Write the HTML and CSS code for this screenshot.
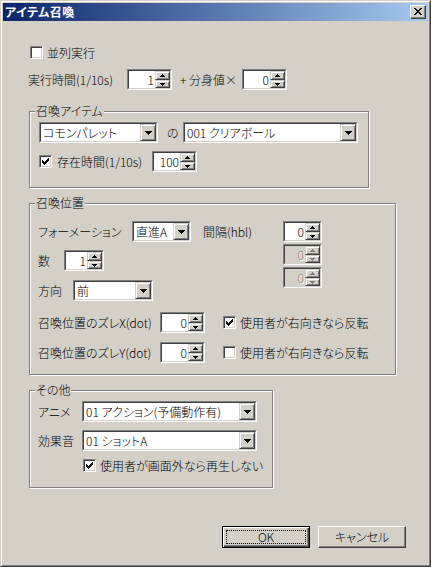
FILE: index.html
```html
<!DOCTYPE html>
<html lang="ja">
<head>
<meta charset="utf-8">
<title>アイテム召喚</title>
<link rel="stylesheet" href="styles.css">
</head>
<body>
<div class="window">
 <div class="frame">
  <div class="titlebar">
   <span class="title">アイテム召喚</span>
   <span class="closebtn"><svg width="8" height="7" viewBox="0 0 8 7" shape-rendering="crispEdges"><path d="M0 0h2v1H0zM6 0h2v1H6zM1 1h2v1H1zM5 1h2v1H5zM2 2h4v1H2zM3 3h2v1H3zM2 4h4v1H2zM1 5h2v1H1zM5 5h2v1H5zM0 6h2v1H0zM6 6h2v1H6z"/></svg></span>
  </div>
  <div class="client">
   <div class="row row-parallel">
    <span class="cb"></span><span class="cb-label">並列実行</span>
   </div>
   <div class="row row-time">
    <span class="lbl lbl-time">実行時間(1/10s)</span>
    <span class="spin w45"><span class="spin-in"><span class="spin-val">1</span><span class="spin-btns"><span class="sb up"><svg width="5" height="3" viewBox="0 0 5 3" shape-rendering="crispEdges"><path d="M2 0h1v1H2zM1 1h3v1H1zM0 2h5v1H0z"/></svg></span><span class="sb dn"><svg width="5" height="3" viewBox="0 0 5 3" shape-rendering="crispEdges"><path d="M0 0h5v1H0zM1 1h3v1H1zM2 2h1v1H2z"/></svg></span></span></span></span>
    <span class="lbl lbl-bunshin">+ 分身値×</span>
    <span class="spin w45"><span class="spin-in"><span class="spin-val">0</span><span class="spin-btns"><span class="sb up"><svg width="5" height="3" viewBox="0 0 5 3" shape-rendering="crispEdges"><path d="M2 0h1v1H2zM1 1h3v1H1zM0 2h5v1H0z"/></svg></span><span class="sb dn"><svg width="5" height="3" viewBox="0 0 5 3" shape-rendering="crispEdges"><path d="M0 0h5v1H0zM1 1h3v1H1zM2 2h1v1H2z"/></svg></span></span></span></span>
   </div>

   <div class="group g-item">
    <div class="gtitle">召喚アイテム</div>
    <div class="row row-combo">
     <span class="combo w119"><span class="combo-in"><span class="ctext">コモンパレット</span><span class="cbtn"><svg width="7" height="4" viewBox="0 0 7 4" shape-rendering="crispEdges"><path d="M0 0h7v1H0zM1 1h5v1H1zM2 2h3v1H2zM3 3h1v1H3z"/></svg></span></span></span>
     <span class="lbl lbl-no">の</span>
     <span class="combo w175"><span class="combo-in"><span class="ctext">001 クリアボール</span><span class="cbtn"><svg width="7" height="4" viewBox="0 0 7 4" shape-rendering="crispEdges"><path d="M0 0h7v1H0zM1 1h5v1H1zM2 2h3v1H2zM3 3h1v1H3z"/></svg></span></span></span>
    </div>
    <div class="row row-exist">
     <span class="cb"><svg width="7" height="7" viewBox="0 0 7 7" shape-rendering="crispEdges"><path d="M0 2h1v3H0zM1 3h1v3H1zM2 4h1v3H2zM3 3h1v3H3zM4 2h1v3H4zM5 1h1v3H5zM6 0h1v3H6z"/></svg></span>
     <span class="cb-label lbl-exist">存在時間(1/10s)</span>
     <span class="spin w45"><span class="spin-in"><span class="spin-val">100</span><span class="spin-btns"><span class="sb up"><svg width="5" height="3" viewBox="0 0 5 3" shape-rendering="crispEdges"><path d="M2 0h1v1H2zM1 1h3v1H1zM0 2h5v1H0z"/></svg></span><span class="sb dn"><svg width="5" height="3" viewBox="0 0 5 3" shape-rendering="crispEdges"><path d="M0 0h5v1H0zM1 1h3v1H1zM2 2h1v1H2z"/></svg></span></span></span></span>
    </div>
   </div>

   <div class="group g-pos">
    <div class="gtitle">召喚位置</div>
    <div class="pos-top">
     <div class="pos-left">
      <div class="row row-form">
       <span class="lbl lbl-form">フォーメーション</span>
       <span class="combo w59"><span class="combo-in"><span class="ctext">直進A</span><span class="cbtn"><svg width="7" height="4" viewBox="0 0 7 4" shape-rendering="crispEdges"><path d="M0 0h7v1H0zM1 1h5v1H1zM2 2h3v1H2zM3 3h1v1H3z"/></svg></span></span></span>
      </div>
      <div class="row row-num">
       <span class="lbl lbl-num">数</span>
       <span class="spin w40"><span class="spin-in"><span class="spin-val">1</span><span class="spin-btns"><span class="sb up"><svg width="5" height="3" viewBox="0 0 5 3" shape-rendering="crispEdges"><path d="M2 0h1v1H2zM1 1h3v1H1zM0 2h5v1H0z"/></svg></span><span class="sb dn"><svg width="5" height="3" viewBox="0 0 5 3" shape-rendering="crispEdges"><path d="M0 0h5v1H0zM1 1h3v1H1zM2 2h1v1H2z"/></svg></span></span></span></span>
      </div>
      <div class="row row-dir">
       <span class="lbl lbl-dir">方向</span>
       <span class="combo w80"><span class="combo-in"><span class="ctext">前</span><span class="cbtn"><svg width="7" height="4" viewBox="0 0 7 4" shape-rendering="crispEdges"><path d="M0 0h7v1H0zM1 1h5v1H1zM2 2h3v1H2zM3 3h1v1H3z"/></svg></span></span></span>
      </div>
     </div>
     <span class="lbl lbl-interval">間隔(hbl)</span>
     <div class="pos-right">
      <span class="spin w39"><span class="spin-in"><span class="spin-val">0</span><span class="spin-btns"><span class="sb up"><svg width="5" height="3" viewBox="0 0 5 3" shape-rendering="crispEdges"><path d="M2 0h1v1H2zM1 1h3v1H1zM0 2h5v1H0z"/></svg></span><span class="sb dn"><svg width="5" height="3" viewBox="0 0 5 3" shape-rendering="crispEdges"><path d="M0 0h5v1H0zM1 1h3v1H1zM2 2h1v1H2z"/></svg></span></span></span></span>
      <span class="spin w39 disabled"><span class="spin-in"><span class="spin-val">0</span><span class="spin-btns"><span class="sb up"><svg width="5" height="3" viewBox="0 0 5 3" shape-rendering="crispEdges"><path d="M2 0h1v1H2zM1 1h3v1H1zM0 2h5v1H0z"/></svg></span><span class="sb dn"><svg width="5" height="3" viewBox="0 0 5 3" shape-rendering="crispEdges"><path d="M0 0h5v1H0zM1 1h3v1H1zM2 2h1v1H2z"/></svg></span></span></span></span>
      <span class="spin w39 disabled"><span class="spin-in"><span class="spin-val">0</span><span class="spin-btns"><span class="sb up"><svg width="5" height="3" viewBox="0 0 5 3" shape-rendering="crispEdges"><path d="M2 0h1v1H2zM1 1h3v1H1zM0 2h5v1H0z"/></svg></span><span class="sb dn"><svg width="5" height="3" viewBox="0 0 5 3" shape-rendering="crispEdges"><path d="M0 0h5v1H0zM1 1h3v1H1zM2 2h1v1H2z"/></svg></span></span></span></span>
     </div>
    </div>
    <div class="row row-shiftx">
     <span class="lbl lbl-shift">召喚位置のズレX(dot)</span>
     <span class="spin w45"><span class="spin-in"><span class="spin-val">0</span><span class="spin-btns"><span class="sb up"><svg width="5" height="3" viewBox="0 0 5 3" shape-rendering="crispEdges"><path d="M2 0h1v1H2zM1 1h3v1H1zM0 2h5v1H0z"/></svg></span><span class="sb dn"><svg width="5" height="3" viewBox="0 0 5 3" shape-rendering="crispEdges"><path d="M0 0h5v1H0zM1 1h3v1H1zM2 2h1v1H2z"/></svg></span></span></span></span>
     <span class="cb cb-flip"><svg width="7" height="7" viewBox="0 0 7 7" shape-rendering="crispEdges"><path d="M0 2h1v3H0zM1 3h1v3H1zM2 4h1v3H2zM3 3h1v3H3zM4 2h1v3H4zM5 1h1v3H5zM6 0h1v3H6z"/></svg></span>
     <span class="cb-label">使用者が右向きなら反転</span>
    </div>
    <div class="row row-shifty">
     <span class="lbl lbl-shift">召喚位置のズレY(dot)</span>
     <span class="spin w45"><span class="spin-in"><span class="spin-val">0</span><span class="spin-btns"><span class="sb up"><svg width="5" height="3" viewBox="0 0 5 3" shape-rendering="crispEdges"><path d="M2 0h1v1H2zM1 1h3v1H1zM0 2h5v1H0z"/></svg></span><span class="sb dn"><svg width="5" height="3" viewBox="0 0 5 3" shape-rendering="crispEdges"><path d="M0 0h5v1H0zM1 1h3v1H1zM2 2h1v1H2z"/></svg></span></span></span></span>
     <span class="cb cb-flip"></span>
     <span class="cb-label">使用者が右向きなら反転</span>
    </div>
   </div>

   <div class="group g-other">
    <div class="gtitle">その他</div>
    <div class="row row-anime">
     <span class="lbl lbl-other">アニメ</span>
     <span class="combo w175"><span class="combo-in"><span class="ctext">01 アクション(予備動作有)</span><span class="cbtn"><svg width="7" height="4" viewBox="0 0 7 4" shape-rendering="crispEdges"><path d="M0 0h7v1H0zM1 1h5v1H1zM2 2h3v1H2zM3 3h1v1H3z"/></svg></span></span></span>
    </div>
    <div class="row row-se">
     <span class="lbl lbl-other">効果音</span>
     <span class="combo w175"><span class="combo-in"><span class="ctext">01 ショットA</span><span class="cbtn"><svg width="7" height="4" viewBox="0 0 7 4" shape-rendering="crispEdges"><path d="M0 0h7v1H0zM1 1h5v1H1zM2 2h3v1H2zM3 3h1v1H3z"/></svg></span></span></span>
    </div>
    <div class="row row-offscreen">
     <span class="cb"><svg width="7" height="7" viewBox="0 0 7 7" shape-rendering="crispEdges"><path d="M0 2h1v3H0zM1 3h1v3H1zM2 4h1v3H2zM3 3h1v3H3zM4 2h1v3H4zM5 1h1v3H5zM6 0h1v3H6z"/></svg></span>
     <span class="cb-label">使用者が画面外なら再生しない</span>
    </div>
   </div>

   <div class="buttons">
    <span class="btn btn-default"><span class="focus">OK</span></span>
    <span class="btn">キャンセル</span>
   </div>
  </div>
 </div>
</div>
</body>
</html>
```

FILE: styles.css
```css
html, body {
  margin: 0;
  padding: 0;
  background: #D4D0C8;
}
body {
  font-family: "Noto Sans CJK JP", "Noto Sans", sans-serif;
  font-size: 12px;
  font-weight: 300;
  line-height: 14px;
  color: #000;
  font-feature-settings: "palt";
}
.window {
  width: 431px;
  height: 567px;
  box-sizing: border-box;
  border: 1px solid;
  border-color: #D4D0C8 #404040 #404040 #D4D0C8;
  background: #D4D0C8;
}
.frame {
  height: 100%;
  box-sizing: border-box;
  border: 1px solid;
  border-color: #fff #808080 #808080 #fff;
  padding: 1px;
  display: flex;
  flex-direction: column;
}
.titlebar {
  height: 18px;
  flex: none;
  display: flex;
  align-items: center;
  justify-content: space-between;
  padding: 0 2px 0 2px;
  background: linear-gradient(to right, #0A246A, #A6CAF0);
}
.title {
  color: #fff;
  font-weight: bold;
  font-size: 12px;
  line-height: 14px;
  letter-spacing: 0.5px;
}
.closebtn {
  width: 16px;
  height: 14px;
  box-sizing: border-box;
  border: 1px solid;
  border-color: #fff #404040 #404040 #fff;
  box-shadow: inset -1px -1px 0 #808080, inset 1px 1px 0 #D4D0C8;
  background: #D4D0C8;
  display: flex;
  align-items: flex-start;
  padding: 2px 0 0 3px;
}
.closebtn svg { display: block; fill: #000; }

.client {
  flex: 1;
  display: flex;
  flex-direction: column;
  align-items: flex-start;
  padding-left: 25px;
}
.row {
  display: flex;
  align-items: center;
  flex: none;
}
.lbl, .cb-label {
  white-space: nowrap;
  line-height: 14px;
}

/* checkbox */
.cb {
  width: 13px;
  height: 13px;
  flex: none;
  box-sizing: border-box;
  border: 1px solid;
  border-color: #808080 #fff #fff #808080;
  box-shadow: inset 1px 1px 0 #404040, inset -1px -1px 0 #D4D0C8;
  background: #fff;
  display: flex;
  align-items: center;
  justify-content: center;
}
.cb svg { display: block; fill: #000; }
.cb-label { margin-left: 4px; }

/* spinner */
.spin {
  height: 21px;
  flex: none;
  box-sizing: border-box;
  display: flex;
  border: 1px solid;
  border-color: #808080 #fff #fff #808080;
}
.spin-in {
  flex: 1;
  display: flex;
  border: 1px solid;
  border-color: #404040 #D4D0C8 #D4D0C8 #404040;
  background: #fff;
  min-width: 0;
}
.spin-val {
  flex: 1;
  text-align: right;
  padding-right: 1px;
  line-height: 17px;
}
.spin-btns {
  width: 15px;
  flex: none;
  display: flex;
  flex-direction: column;
}
.sb {
  box-sizing: border-box;
  border: 1px solid;
  border-color: #D4D0C8 #404040 #404040 #D4D0C8;
  box-shadow: inset 1px 1px 0 #fff, inset -1px -1px 0 #808080;
  background: #D4D0C8;
  display: flex;
  align-items: center;
  justify-content: center;
}
.sb.up { height: 9px; }
.sb.dn { height: 8px; }
.sb svg { display: block; fill: #000; }
.spin.disabled .spin-in { background: #D4D0C8; }
.spin.disabled .spin-val { color: #808080; text-shadow: 1px 1px 0 #fff; }
.spin.disabled .sb svg { fill: #808080; }
.w39 { width: 39px; }
.w40 { width: 40px; }
.w45 { width: 45px; }

/* combo */
.combo {
  height: 21px;
  flex: none;
  box-sizing: border-box;
  display: flex;
  border: 1px solid;
  border-color: #808080 #fff #fff #808080;
}
.combo-in {
  flex: 1;
  display: flex;
  border: 1px solid;
  border-color: #404040 #D4D0C8 #D4D0C8 #404040;
  background: #fff;
  min-width: 0;
}
.ctext {
  flex: 1;
  padding-left: 2px;
  line-height: 17px;
  white-space: nowrap;
  overflow: hidden;
}
.cbtn {
  width: 16px;
  height: 17px;
  flex: none;
  box-sizing: border-box;
  border: 1px solid;
  border-color: #D4D0C8 #404040 #404040 #D4D0C8;
  box-shadow: inset 1px 1px 0 #fff, inset -1px -1px 0 #808080;
  background: #D4D0C8;
  display: flex;
  align-items: center;
  justify-content: center;
}
.cbtn svg { display: block; fill: #000; }
.w59 { width: 59px; }
.w80 { width: 80px; }
.w119 { width: 119px; }
.w175 { width: 175px; }

/* group boxes */
.group {
  flex: none;
  display: flex;
  flex-direction: column;
  align-items: flex-start;
  box-sizing: border-box;
  margin-left: 1px;
  border: 1px solid #808080;
  box-shadow: 1px 1px 0 #fff, inset 1px 1px 0 #fff;
  padding-left: 8px;
}
.gtitle {
  margin: -8px 0 0 -3px;
  padding: 0 1px;
  height: 14px;
  line-height: 14px;
  background: #D4D0C8;
  white-space: nowrap;
}

/* top rows */
.row-parallel { margin: 25px 0 0 2px; height: 13px; }
.row-time { margin-top: 10px; height: 21px; }
.lbl-time { width: 99px; }
.lbl-bunshin { width: 62px; margin-left: 8px; }

/* group 1 */
.g-item {
  width: 340px;
  margin-top: 21px;
  padding-left: 9px;
  padding-bottom: 15px;
}
.g-item .gtitle { margin-left: -4px; }
.row-combo { margin-top: 4px; height: 21px; }
.lbl-no { width: 16px; margin: 0 0 0 9px; }
.row-exist { margin-top: 8px; height: 21px; }
.lbl-exist { width: 95px; margin-left: 5px; }

/* group 2 */
.g-pos {
  width: 367px;
  margin-top: 15px;
  padding-bottom: 11px;
}
.pos-top {
  display: flex;
  align-items: flex-start;
  margin-top: 11px;
}
.pos-left {
  display: flex;
  flex-direction: column;
  width: 165px;
}
.row-form { height: 21px; }
.row-num { height: 21px; margin-top: 8px; }
.row-dir { height: 21px; margin-top: 9px; }
.lbl-form { width: 94px; }
.lbl-num { width: 26px; }
.lbl-dir { width: 35px; }
.lbl-interval {
  width: 80px;
  line-height: 21px;
  height: 21px;
}
.pos-right {
  display: flex;
  flex-direction: column;
  gap: 2px;
}
.row-shiftx { margin-top: 11px; height: 21px; }
.row-shifty { margin-top: 9px; height: 21px; }
.lbl-shift { width: 122px; }
.cb-flip { margin-left: 18px; }

/* group 3 */
.g-other {
  width: 244px;
  margin-top: 15px;
  padding-bottom: 15px;
}
.row-anime { margin-top: 4px; height: 21px; }
.row-se { margin-top: 8px; height: 21px; }
.lbl-other { width: 44px; }
.row-offscreen { margin: 8px 0 0 45px; height: 13px; }

/* buttons */
.buttons {
  display: flex;
  gap: 8px;
  align-self: flex-end;
  margin: 38px 22px 0 0;
}
.btn {
  width: 88px;
  height: 22px;
  box-sizing: border-box;
  border: 1px solid;
  border-color: #fff #404040 #404040 #fff;
  box-shadow: inset -1px -1px 0 #808080, inset 1px 1px 0 #D4D0C8;
  background: #D4D0C8;
  display: flex;
  align-items: center;
  justify-content: center;
  line-height: 14px;
}
.btn-default {
  border-color: #000;
  box-shadow: inset 1px 1px 0 #fff, inset -1px -1px 0 #404040, inset -2px -2px 0 #808080;
  padding: 3px;
  align-items: stretch;
}
.focus {
  flex: 1;
  border: 1px dotted #000;
  display: flex;
  align-items: center;
  justify-content: center;
}
```
